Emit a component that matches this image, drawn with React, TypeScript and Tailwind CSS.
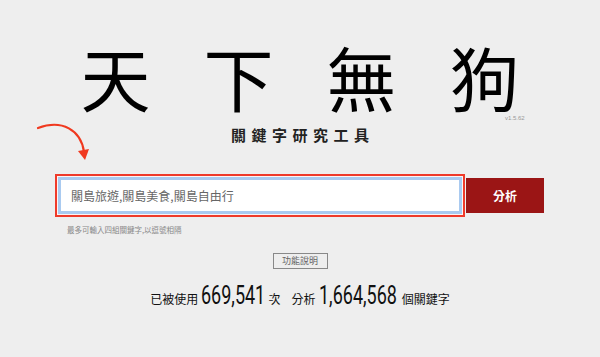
import React from "react";

const num = "inline-block origin-left scale-x-[0.72] text-[25px] leading-none font-['Roboto',sans-serif]";

export default function App() {
  return (
    <div className="relative w-[600px] h-[357px] overflow-hidden bg-[#eeeeee] font-['Noto_Sans_CJK_TC','Noto_Sans_CJK_SC',sans-serif] text-black">
      {/* arrow pointing at the input */}
      <svg className="absolute left-0 top-0" width="120" height="180" viewBox="0 0 120 180">
        <path d="M38 128 C 62 119, 81 130, 84 152" fill="none" stroke="#f0391f" strokeWidth="2.2" strokeLinecap="round" />
        <path d="M78 151 L85 160 L89 149 Z" fill="#f0391f" />
      </svg>

      <div className="flex flex-col items-center pt-[42px]">
        <h1 className="text-[70px] leading-none font-normal tracking-[53px] mr-[-53px]">天下無狗</h1>
        <div className="absolute left-[505px] top-[115px] text-[6px] leading-none text-[#999] font-['Liberation_Sans',sans-serif]">v1.5.62</div>
        <h2 className="mt-[15px] text-[15px] leading-none font-bold tracking-[5.5px] mr-[-5.5px] text-[#222]">關鍵字研究工具</h2>
      </div>

      <div className="mt-[32px] ml-[55px] flex items-center w-[489px]">
        <div className="w-[410px] h-[43px] border-2 border-[#ef3a2a] p-px bg-[#fdf3f2]">
          <div className="h-full border-[3px] border-[#a9caf0] bg-white flex items-center pl-[10px]">
            <span className="text-[12px] text-[#666]">關島旅遊,關島美食,關島自由行</span>
          </div>
        </div>
        <button className="ml-px w-[78px] h-[35px] bg-[#9b1515] text-white text-[12px] font-bold">分析</button>
      </div>
      <p className="ml-[67px] mt-[9px] text-[7.5px] leading-none text-[#888]">最多可輸入四組關鍵字,以逗號相隔</p>

      <div className="flex flex-col items-center">
        <button className="mt-[19px] w-[55px] h-[16px] border border-[#888] text-[9px] leading-none text-[#666] flex items-center justify-center">功能說明</button>
        <div className="mt-[14px] flex items-baseline text-[#111]">
          <span className="text-[12px]">已被使用</span>
          <span className={`ml-[3px] mr-[-25px] ${num}`}>669,541</span>
          <span className="ml-[3px] text-[12px]">次</span>
          <span className="ml-[11px] text-[12px]">分析</span>
          <span className={`ml-[3px] mr-[-30px] ${num}`}>1,664,568</span>
          <span className="ml-[5px] text-[12px]">個關鍵字</span>
        </div>
      </div>
    </div>
  );
}
